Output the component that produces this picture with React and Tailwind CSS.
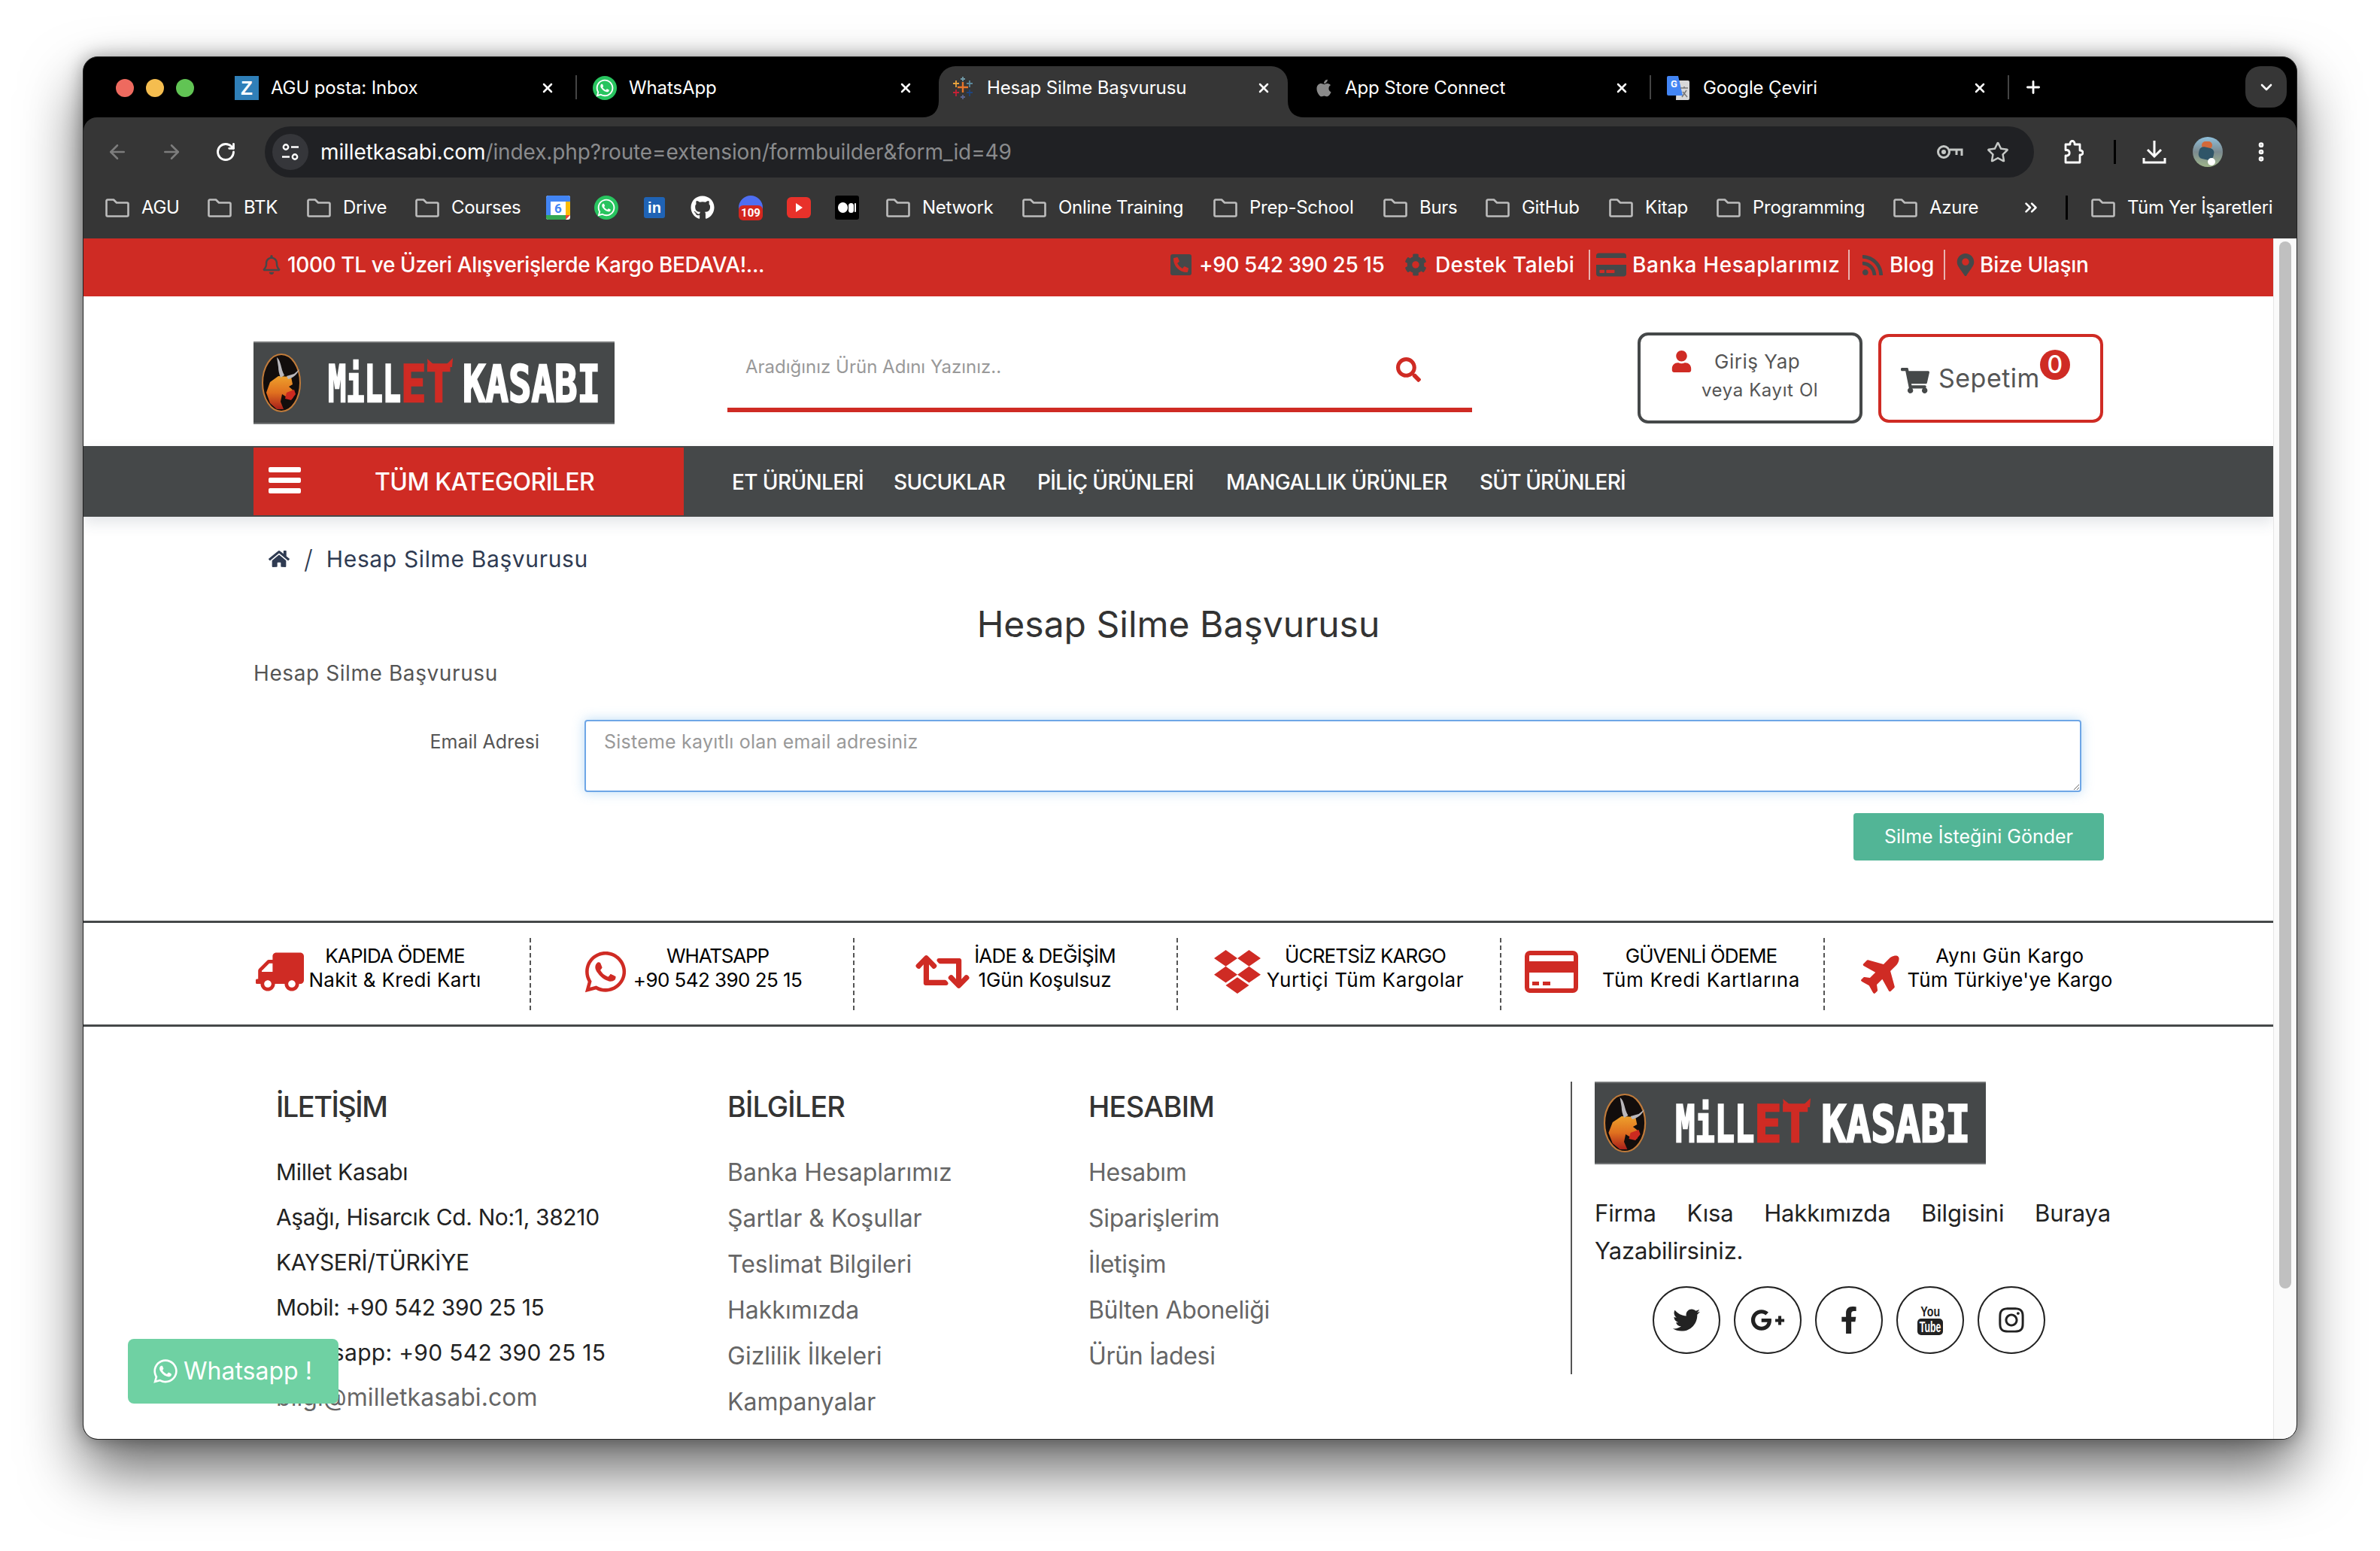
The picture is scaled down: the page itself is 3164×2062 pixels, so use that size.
import React from 'react';
import { FaWhatsapp, FaApple, FaGithub, FaRegBell, FaPhoneSquareAlt, FaCog, FaCreditCard, FaRss, FaMapMarkerAlt, FaUser, FaShoppingCart, FaSearch, FaHome, FaTruck, FaRetweet, FaDropbox, FaPlane, FaTwitter, FaGooglePlusG, FaFacebookF, FaInstagram, FaRegStar } from 'react-icons/fa';
import { ArrowLeft, ArrowRight, RotateCw, X, Plus, ChevronDown, EllipsisVertical, ChevronsRight } from 'lucide-react';

const Folder = () => (
  <svg width="32" height="25" viewBox="0 0 32 25" className="shrink-0" fill="none" stroke="#bdbdbd" strokeWidth="2.6" strokeLinejoin="round">
    <path d="M1.5 3a1.5 1.5 0 0 1 1.5-1.5h8l4 4h14a1.5 1.5 0 0 1 1.5 1.5v15a1.5 1.5 0 0 1-1.5 1.5H3a1.5 1.5 0 0 1-1.5-1.5z" />
  </svg>
);

const Logo = ({ w, id }) => (
  <svg width={w} height="110" viewBox="0 0 480 110" preserveAspectRatio="none" className="block shrink-0">
    <defs>
      <linearGradient id={id} x1="0" y1="0" x2="0" y2="1">
        <stop offset="0" stopColor="#eda02c" />
        <stop offset="0.5" stopColor="#e0701f" />
        <stop offset="1" stopColor="#a81f1a" />
      </linearGradient>
    </defs>
    <rect width="480" height="110" fill="#454849" />
    <rect width="480" height="2" fill="#737576" />
    <rect y="108" width="480" height="2" fill="#737576" />
    <ellipse cx="37" cy="55" rx="25" ry="38" fill="#120d0c" stroke="#c17b3a" strokeWidth="2" />
    <path d="M33 46 L50 47 L52 57 L47 60 L54 66 L52 76 L44 74 L38 70 L36 80 L40 90 L31 90 L22 82 L17 68 L22 54 Z" fill={`url(#${id})`} />
    <path d="M33 34 L31 21 C37 26 36 36 41 45 L36 48 C34 43 33 38 33 34 Z M61 37 C58 44 52 49 46 50 L44 46 L54 43 Z" fill="#b9b7bb" />
    <path d="M44 68 L54 64 L56 70 L50 78 L42 76 Z" fill="#cc2a20" />
    <g fontFamily="'DejaVu Sans Mono', monospace" fontWeight="700" fontSize="67" strokeWidth="2.4" strokeLinejoin="miter">
      <text x="99" y="80" textLength="97" lengthAdjust="spacingAndGlyphs" fill="#fff" stroke="#fff">MiLL</text>
      <text x="196" y="80" textLength="67" lengthAdjust="spacingAndGlyphs" fill="#cf2b24" stroke="#cf2b24">ET</text>
      <text x="278" y="80" textLength="183" lengthAdjust="spacingAndGlyphs" fill="#fff" stroke="#fff">KASABI</text>
    </g>
    <path d="M232 34 L231 23 L239 30 L257 30 L265 22 L264 34 Z" fill="#cf2b24" />
  </svg>
);

const Tableau = () => (
  <svg width="32" height="32" viewBox="0 0 32 32" className="shrink-0" strokeWidth="1.8" fill="none">
    <path d="M16 8v14M9 15h14" stroke="#e8762b" strokeWidth="2.4" />
    <path d="M7 6v9M3 10h8" stroke="#e8a33d" />
    <path d="M25 6v9M21 10h8" stroke="#5b879b" />
    <path d="M16 1v6M13 4h6" stroke="#7099a6" />
    <path d="M7 18v9M3 22h8" stroke="#c72035" />
    <path d="M25 18v9M21 22h8" stroke="#1f447e" />
    <path d="M16 25v6M13 28h6" stroke="#5b6591" />
  </svg>
);

const Translate = () => (
  <svg width="30" height="32" viewBox="0 0 30 32" className="shrink-0">
    <path d="M13 6h15a2 2 0 0 1 2 2v22a2 2 0 0 1-2 2H12z" fill="#d8d8d8" />
    <path d="M2 0h13l6 26H2a2 2 0 0 1-2-2V2a2 2 0 0 1 2-2z" fill="#4285f4" />
    <text x="5" y="15" fontSize="13" fontWeight="700" fill="#fff" fontFamily="Roboto, sans-serif">G</text>
    <path d="M18 16h10M23 14v2M20 28l6-9M21 21l6 7" stroke="#777" strokeWidth="1.5" fill="none" />
  </svg>
);

const tabs = [
  { icon: <div className="w-8 h-8 shrink-0 bg-[#2f7fb8] flex items-center justify-center text-white font-bold text-[26px] font-['Liberation_Sans',sans-serif]">Z</div>, t: 'AGU posta: Inbox', sep: true },
  { icon: <div className="w-8 h-8 shrink-0 rounded-full bg-[#28c45f] flex items-center justify-center text-white"><FaWhatsapp size={26} /></div>, t: 'WhatsApp' },
  { icon: <Tableau />, t: 'Hesap Silme Başvurusu', active: true },
  { icon: <div className="w-8 h-8 shrink-0 flex items-center justify-center text-[#8a8a8a] pl-2"><FaApple size={26} /></div>, t: 'App Store Connect', sep: true },
  { icon: <Translate />, t: 'Google Çeviri', sep: true },
];

const Tab = ({ icon, t, active, sep }) => (
  <div className="relative w-[476px] h-[68px] pt-[12px] flex items-start shrink-0">
    {active && (
      <>
        <div className="absolute left-0 top-0 w-[464px] h-[68px] bg-[#363636] rounded-t-[22px]" />
        <svg className="absolute left-[-22px] bottom-0" width="22" height="22" viewBox="0 0 22 22"><path d="M22 0v22H0C14 22 22 14 22 0z" fill="#363636" /></svg>
        <svg className="absolute left-[464px] bottom-0" width="22" height="22" viewBox="0 0 22 22"><path d="M0 0v22h22C8 22 0 14 0 0z" fill="#363636" /></svg>
      </>
    )}
    <div className="relative flex items-center h-[34px] w-full pl-[16px]">
      {icon}
      <span className="absolute left-[64px] text-[24px] leading-[34px] text-white whitespace-nowrap tracking-[-0.005em]">{t}</span>
      <X className="absolute left-[422px] text-white" size={20} strokeWidth={3} />
      {sep && <div className="absolute left-[469px] top-0 w-[2px] h-[32px] bg-[#444]" />}
    </div>
  </div>
);

const bm = (label, w) => ({ label, w });
const group1 = [bm('AGU', 50), bm('BTK', 46), bm('Drive', 58), bm('Courses', 92)];
const group2 = [bm('Network', 95), bm('Online Training', 168), bm('Prep-School', 140), bm('Burs', 50), bm('GitHub', 78), bm('Kitap', 57), bm('Programming', 149), bm('Azure', 63)];

const Bookmark = ({ label, w }) => (
  <div className="flex items-center gap-[16px] shrink-0">
    <Folder />
    <span className="text-[24px] leading-[30px] text-white whitespace-nowrap tracking-[-0.012em]" style={{ width: w }}>{label}</span>
  </div>
);

const TopSep = () => <div className="w-[2px] h-[40px] bg-[#e9b3b0] shrink-0" />;

const CardIcon = () => (
  <svg width="71" height="56" viewBox="0 0 71 56" className="text-[#cf2b24]">
    <rect x="3" y="3" width="65" height="50" rx="4" fill="#fff" stroke="currentColor" strokeWidth="6" />
    <rect y="14" width="71" height="15" fill="currentColor" />
    <path d="M10 41h9v5h-9zM24 41h10v5H24z" fill="currentColor" />
  </svg>
);

const features = [
  { icon: <FaTruck size={64} className="-scale-x-100 text-[#cf2b24]" />, a: 'KAPIDA ÖDEME', b: 'Nakit & Kredi Kartı', gap: 'gap-[6px]', ta: 'tracking-[-0.032em]', tb: 'tracking-[0.012em]' },
  { icon: <FaWhatsapp size={62} className="text-[#cf2b24]" />, a: 'WHATSAPP', b: '+90 542 390 25 15', gap: 'gap-[6px]', ta: 'tracking-[-0.045em]', tb: 'tracking-[-0.022em]' },
  { icon: <FaRetweet size={72} className="text-[#cf2b24]" />, a: 'İADE & DEĞİŞİM', b: '1Gün Koşulsuz', gap: 'gap-[6px]', ta: 'tracking-[-0.03em]', tb: 'tracking-[-0.006em]' },
  { icon: <FaDropbox size={62} className="scale-y-110 text-[#cf2b24]" />, a: 'ÜCRETSİZ KARGO', b: 'Yurtiçi Tüm Kargolar', gap: 'gap-[8px]', ta: 'tracking-[-0.034em]', tb: 'tracking-[0.024em]' },
  { icon: <CardIcon />, a: 'GÜVENLİ ÖDEME', b: 'Tüm Kredi Kartlarına', gap: 'gap-[32px]', ta: 'tracking-[-0.038em]', tb: 'tracking-[0.024em]' },
  { icon: <FaPlane size={58} className="-rotate-45 text-[#cf2b24]" />, a: 'Aynı Gün Kargo', b: 'Tüm Türkiye\'ye Kargo', gap: 'gap-[4px]', ta: 'tracking-[0.02em]', tb: 'tracking-[0.008em]' },
];

const Social = ({ children }) => (
  <div className="w-[90px] h-[90px] rounded-full border-2 border-[#222] flex items-center justify-center text-[#222] shrink-0">{children}</div>
);

export default function App() {
  return (
    <div className="w-[3164px] h-[2062px] bg-white pt-[75px] pl-[110px] overflow-hidden font-['Inter',sans-serif]">
      <div className="w-[2944px] h-[1839px] rounded-[20px] overflow-hidden bg-black flex flex-col shadow-[0_40px_80px_rgba(0,0,0,0.6),0_0_24px_rgba(0,0,0,0.35)] border border-[#222]">
        {/* tab strip */}
        <div className="relative h-[80px] shrink-0 pt-[12px] flex items-start">
          <div className="flex items-center gap-[16px] pl-[43px] w-[185px] pt-[17px] shrink-0">
            <div className="w-6 h-6 rounded-full bg-[#ee6a5f]" />
            <div className="w-6 h-6 rounded-full bg-[#f5bd4f]" />
            <div className="w-6 h-6 rounded-full bg-[#61c454]" />
          </div>
          {tabs.map((t) => <Tab key={t.t} {...t} />)}
          <Plus className="text-white ml-[14px] mt-[15px] shrink-0" size={26} strokeWidth={2.6} />
          <div className="absolute left-[2874px] top-[12px] w-[55px] h-[55px] rounded-[20px] bg-[#363636] flex items-center justify-center">
            <ChevronDown className="text-white" size={24} strokeWidth={2.6} />
          </div>
        </div>
        {/* toolbar */}
        <div className="h-[161px] shrink-0 bg-[#363636] rounded-t-[18px] flex flex-col">
          <div className="h-[92px] flex items-center pl-[9px]">
            <div className="w-[72px] flex justify-center shrink-0"><ArrowLeft className="text-[#7d7d7d]" size={30} strokeWidth={2} /></div>
            <div className="w-[72px] flex justify-center shrink-0"><ArrowRight className="text-[#7d7d7d]" size={30} strokeWidth={2} /></div>
            <div className="w-[72px] flex justify-center shrink-0"><RotateCw className="text-white" size={28} strokeWidth={2.4} /></div>
            <div className="ml-[16px] w-[2352px] h-[68px] shrink-0 rounded-full bg-[#202124] flex items-center pl-[10px]">
              <div className="w-[48px] h-[48px] rounded-full bg-[#35363a] flex items-center justify-center shrink-0">
                <svg width="26" height="26" viewBox="0 0 26 26" fill="none" stroke="#fff" strokeWidth="2.4">
                  <circle cx="7" cy="6.5" r="3.2" /><path d="M14 6.5h10M2 19.5h10" /><circle cx="19" cy="19.5" r="3.2" />
                </svg>
              </div>
              <div className="ml-[16px] text-[28px] leading-[40px] whitespace-nowrap text-[#8a8b8d] tracking-[-0.004em]"><span className="text-white">milletkasabi.com</span>/index.php?route=extension/formbuilder&amp;form_id=49</div>
              <div className="ml-auto w-[64px] flex justify-center">
                <svg width="36" height="22" viewBox="0 0 36 22" fill="none" stroke="#c4c7c5" strokeWidth="3">
                  <circle cx="10" cy="11" r="7.5" /><circle cx="10" cy="11" r="1.5" /><path d="M18 8h16v8M27 8v7" />
                </svg>
              </div>
              <div className="w-[64px] mr-[16px] flex justify-center"><FaRegStar className="text-[#c4c7c5]" size={30} /></div>
            </div>
            <div className="w-[106px] flex justify-center shrink-0">
              <svg width="26" height="32" viewBox="0 0 26 32" fill="none" stroke="#fff" strokeWidth="2.8" strokeLinejoin="round">
                <path d="M2 6h6V4.500a3 3 0 0 1 6 0V6h7v8h1a3 3 0 0 1 0 6h-1v10H2v-9h2a3.800 3.800 0 0 0 0-7.500H2z" />
              </svg>
            </div>
            <div className="w-[3px] h-[32px] bg-black shrink-0" />
            <div className="w-[102px] flex justify-center shrink-0">
              <svg width="32" height="32" viewBox="0 0 32 32" fill="none" stroke="#fff" strokeWidth="3">
                <path d="M16 1v20M7 13l9 9 9-9M2 24v6h28v-6" />
              </svg>
            </div>
            <div className="w-[40px] h-[40px] rounded-full shrink-0 bg-gradient-to-b from-[#8fc0dc] via-[#7b8a8f] to-[#9fb58a] relative overflow-hidden">
              <div className="absolute left-[12px] top-[6px] w-[14px] h-[10px] rounded-full bg-[#d2693a]" />
              <div className="absolute left-[8px] top-[14px] w-[20px] h-[16px] rounded-md bg-[#2f5568] rotate-12" />
              <div className="absolute left-[20px] top-[28px] w-[10px] h-[10px] rounded-full bg-white" />
            </div>
            <div className="w-[102px] flex justify-center shrink-0"><EllipsisVertical className="text-white" size={32} strokeWidth={3} /></div>
          </div>
          <div className="h-[69px] flex items-start pt-[6px] pl-[29px] gap-[38px]">
            {group1.map((b) => <div key={b.label} className="h-[44px] flex items-center"><Bookmark {...b} /></div>)}
            <div className="flex items-center gap-[32px] h-[44px] -ml-[4px] mr-[-2px]">
              <svg width="32" height="32" viewBox="0 0 32 32"><rect width="32" height="32" rx="3" fill="#fff" /><path d="M0 3a3 3 0 0 1 3-3h26a3 3 0 0 1 3 3v5H0z" fill="#4285f4" /><path d="M0 8h6v18H0z" fill="#4285f4" /><path d="M26 8h6v18h-6z" fill="#fbbc04" /><path d="M0 26h26v6H3a3 3 0 0 1-3-3z" fill="#34a853" /><path d="M26 26h6l-6 6z" fill="#ea4335" /><text x="16" y="23" textAnchor="middle" fontSize="17" fontWeight="700" fill="#4285f4" fontFamily="Roboto, sans-serif">6</text></svg>
              <div className="w-8 h-8 rounded-full bg-[#28c45f] flex items-center justify-center text-white"><FaWhatsapp size={26} /></div>
              <div className="w-[28px] h-[28px] rounded-[3px] bg-[#1f63b5] flex items-center justify-center text-white text-[20px] font-bold font-['Liberation_Sans',sans-serif] ml-[2px] mr-[2px]">in</div>
              <FaGithub className="text-white" size={32} />
              <div className="relative w-8 h-8 rounded-full bg-[#4e6ef2]"><div className="absolute left-0 right-0 bottom-[-1px] h-[20px] rounded-[6px] bg-[#d3271f] text-white text-[15px] leading-[20px] text-center font-bold font-['Roboto',sans-serif]">109</div></div>
              <div className="w-8 h-[28px] rounded-[6px] bg-[#e8312a] flex items-center justify-center"><div className="w-0 h-0 border-y-[6px] border-y-transparent border-l-[9px] border-l-white" /></div>
              <div className="w-8 h-8 rounded-[3px] bg-black flex items-center justify-center gap-[1px]"><div className="w-[13px] h-[14px] rounded-full bg-white" /><div className="w-[7px] h-[13px] rounded-full bg-white" /><div className="w-[2px] h-[12px] rounded-full bg-white" /></div>
            </div>
            {group2.map((b) => <div key={b.label} className="h-[44px] flex items-center"><Bookmark {...b} /></div>)}
            <div className="h-[44px] flex items-center ml-[21px]"><ChevronsRight className="text-white" size={26} strokeWidth={2.4} /></div>
            <div className="h-[32px] w-[3px] bg-black mt-[6px] -ml-[5px] shrink-0" />
            <div className="h-[44px] flex items-center -ml-[7px]"><Bookmark label="Tüm Yer İşaretleri" w={194} /></div>
          </div>
        </div>
        {/* page */}
        <div className="flex-1 min-h-0 flex bg-white">
          <div className="w-[2911px] shrink-0 text-[#333] overflow-hidden">
            {/* top bar */}
            <div className="h-[77px] bg-[#cf2b24] flex items-center text-white text-[28px] font-medium whitespace-nowrap pl-[237px] pb-[7px]">
              <FaRegBell className="text-[#454849] mr-[8px] shrink-0" size={26} />
              <span className="w-[633px] tracking-[-0.014em]">1000 TL ve Üzeri Alışverişlerde Kargo BEDAVA!...</span>
              <FaPhoneSquareAlt className="text-[#454849] ml-[539px] mr-[8px] shrink-0" size={32} />
              <span className="w-[246px] tracking-[-0.016em]">+90 542 390 25 15</span>
              <FaCog className="text-[#454849] ml-[27px] mr-[11px] shrink-0" size={30} />
              <span className="w-[185px] tracking-[0.013em]">Destek Talebi</span>
              <div className="ml-[19px]"><TopSep /></div>
              <FaCreditCard className="text-[#454849] ml-[8px] mr-[8px] shrink-0" size={40} />
              <span className="w-[276px] tracking-[0.024em]">Banka Hesaplarımız</span>
              <div className="ml-[11px]"><TopSep /></div>
              <FaRss className="text-[#454849] ml-[15px] mr-[7px] shrink-0" size={31} />
              <span className="w-[60px] tracking-[-0.005em]">Blog</span>
              <div className="ml-[12px]"><TopSep /></div>
              <FaMapMarkerAlt className="text-[#454849] ml-[12px] mr-[4px] shrink-0" size={30} />
              <span className="tracking-[-0.008em]">Bize Ulaşın</span>
            </div>
            {/* header */}
            <div className="h-[199px] flex items-start pl-[226px] pt-[60px]">
              <Logo w={480} id="g1" />
              <div className="ml-[150px] w-[990px] h-[94px] border-b-[6px] border-[#cf2b24] flex items-center pl-[24px] pr-[68px] pb-[20px]">
                <input readOnly placeholder="Aradığınız Ürün Adını Yazınız.." className="flex-1 outline-none bg-transparent text-[24px] placeholder:text-[#999]" />
                <FaSearch className="text-[#cf2b24] mt-[6px]" size={33} />
              </div>
              <div className="ml-[220px] -mt-[12px] w-[299px] h-[121px] rounded-[14px] border-[4px] border-[#454849] flex flex-col pt-[14px] text-[#555] relative">
                <div className="flex items-center pl-[40px] h-[40px]">
                  <FaUser className="text-[#cf2b24]" size={29} />
                  <span className="ml-[29px] text-[26px] tracking-[0.02em]">Giriş Yap</span>
                </div>
                <div className="text-[24px] tracking-[0.025em] leading-[38px] pl-[81px]">veya Kayıt Ol</div>
              </div>
              <div className="ml-[21px] -mt-[10px] w-[299px] h-[118px] rounded-[14px] border-[4px] border-[#cf2b24] flex items-start pt-[19px] pl-[26px] text-[#555]">
                <FaShoppingCart className="text-[#454849] mt-[20px]" size={38} />
                <span className="ml-[12px] mt-[14px] text-[34px] leading-[44px] tracking-[0.014em]">Sepetim</span>
                <div className="w-[40px] h-[40px] rounded-full bg-[#cf2b24] text-white text-[32px] leading-[40px] text-center font-medium -mt-[2px]">0</div>
              </div>
            </div>
            {/* nav */}
            <div className="relative h-[94px] bg-[#454849] flex items-center pl-[226px] shadow-[0_8px_18px_rgba(60,70,90,0.14)] text-white text-[28px] font-medium tracking-[-0.022em]">
              <div className="w-[572px] h-[90px] bg-[#cf2b24] flex items-center shrink-0 pl-[20px]">
                <div className="flex flex-col gap-[7px] pb-[4px]">
                  <div className="w-[43px] h-[7px] rounded-[2px] bg-white" />
                  <div className="w-[43px] h-[7px] rounded-[2px] bg-white" />
                  <div className="w-[43px] h-[7px] rounded-[2px] bg-white" />
                </div>
                <span className="ml-[98px] pt-[2px] text-[32px] whitespace-nowrap tracking-[-0.017em]">TÜM KATEGORİLER</span>
              </div>
              <span className="ml-[64px] pt-[2px] w-[215px] whitespace-nowrap">ET ÜRÜNLERİ</span>
              <span className="w-[191px] pt-[2px] whitespace-nowrap">SUCUKLAR</span>
              <span className="w-[251px] pt-[2px] whitespace-nowrap">PİLİÇ ÜRÜNLERİ</span>
              <span className="w-[337px] pt-[2px] whitespace-nowrap">MANGALLIK ÜRÜNLER</span>
              <span className="whitespace-nowrap pt-[2px] tracking-[-0.03em]">SÜT ÜRÜNLERİ</span>
            </div>
            {/* breadcrumb */}
            <div className="h-[112px] pl-[246px] pt-[26px] flex items-center pb-[26px] text-[#2f3b52]">
              <FaHome size={28} />
              <span className="ml-[19px] text-[34px] font-light">/</span>
              <span className="ml-[18px] text-[30px] tracking-[0.021em]">Hesap Silme Başvurusu</span>
            </div>
            {/* title */}
            <h1 className="text-center text-[48px] leading-[60px] text-[#333] pt-[1px]">Hesap Silme Başvurusu</h1>
            <div className="pl-[226px] mt-[15px] text-[28px] leading-[40px] text-[#555] tracking-[0.021em]">Hesap Silme Başvurusu</div>
            {/* form */}
            <div className="flex mt-[42px]">
              <label className="w-[606px] text-right text-[25px] leading-[40px] text-[#555] pt-[9px] shrink-0">Email Adresi</label>
              <textarea readOnly placeholder="Sisteme kayıtlı olan email adresiniz" className="ml-[60px] w-[1990px] h-[96px] border-2 border-[#6ea6e6] rounded-[4px] outline-none shadow-[0_0_16px_rgba(102,175,233,0.45)] px-[24px] py-[12px] text-[25px] leading-[30px] tracking-[0.009em] placeholder:text-[#999]" />
            </div>
            <div className="flex justify-end pr-[225px] mt-[28px]">
              <div className="w-[333px] h-[63px] rounded-[4px] bg-[#52b596] flex items-center justify-center text-white text-[25px]">Silme İsteğini Gönder</div>
            </div>
            {/* features */}
            <div className="mt-[80px] h-[141px] border-y-[3px] border-[#454849] flex items-center pl-[165px]">
              {features.map((f, i) => (
                <div key={f.a} className={`w-[430px] h-[96px] flex items-center justify-center shrink-0 ${f.gap} ${i < 5 ? 'border-r-2 border-dashed border-[#555]' : ''}`}>
                  <div className="shrink-0 mb-[6px]">{f.icon}</div>
                  <div className="text-center text-[26px] leading-[32px] text-black whitespace-nowrap mb-[15px]">
                    <div className={f.ta}>{f.a}</div>
                    <div className={f.tb}>{f.b}</div>
                  </div>
                </div>
              ))}
            </div>
            {/* footer */}
            <div className="flex pl-[256px] pt-[73px] relative">
              <div className="w-[600px] shrink-0">
                <h3 className="mt-[8px] text-[38px] leading-[50px] font-medium text-[#333] tracking-[-0.04em]">İLETİŞİM</h3>
                <div className="mt-[32px] text-[30px] leading-[60.1px] text-[#222] tracking-[-0.012em] whitespace-nowrap">
                  <div>Millet Kasabı</div>
                  <div>Aşağı, Hisarcık Cd. No:1, 38210</div>
                  <div>KAYSERİ/TÜRKİYE</div>
                  <div>Mobil: +90 542 390 25 15</div>
                  <div className="tracking-[0.01em]">Whatsapp: +90 542 390 25 15</div>
                  <div className="text-[#666] text-[32px] tracking-[0.002em]">bilgi@milletkasabi.com</div>
                </div>
              </div>
              <div className="w-[480px] shrink-0">
                <h3 className="mt-[8px] text-[38px] leading-[50px] font-medium text-[#333] tracking-[-0.025em]">BİLGİLER</h3>
                <div className="mt-[32px] text-[32px] leading-[61px] text-[#666] whitespace-nowrap">
                  <div>Banka Hesaplarımız</div>
                  <div>Şartlar &amp; Koşullar</div>
                  <div>Teslimat Bilgileri</div>
                  <div>Hakkımızda</div>
                  <div>Gizlilik İlkeleri</div>
                  <div>Kampanyalar</div>
                </div>
              </div>
              <div className="w-[641px] shrink-0">
                <h3 className="mt-[8px] text-[38px] leading-[50px] font-medium text-[#333] tracking-[-0.02em]">HESABIM</h3>
                <div className="mt-[32px] text-[32px] leading-[61px] text-[#666] tracking-[-0.01em] whitespace-nowrap">
                  <div>Hesabım</div>
                  <div>Siparişlerim</div>
                  <div>İletişim</div>
                  <div>Bülten Aboneliği</div>
                  <div>Ürün İadesi</div>
                </div>
              </div>
              <div className="border-l-2 border-[#555] h-[389px] pl-[30px] w-[720px] shrink-0">
                <Logo w={520} id="g2" />
                <p className="mt-[40px] w-[686px] text-justify text-[31px] leading-[50px] text-[#222] tracking-[-0.005em]">Firma Kısa Hakkımızda Bilgisini Buraya Yazabilirsiniz.</p>
                <div className="mt-[22px] ml-[77px] flex gap-[18px]">
                  <Social><FaTwitter size={36} /></Social>
                  <Social><FaGooglePlusG size={46} /></Social>
                  <Social><FaFacebookF size={36} /></Social>
                  <Social>
                    <div className="flex flex-col items-center font-['Liberation_Sans',sans-serif] font-bold leading-none">
                      <span className="text-[19px] scale-x-75 leading-[17px]">You</span>
                      <span className="mt-[1px] w-[34px] h-[22px] bg-[#222] rounded-[5px] flex items-center justify-center overflow-hidden"><span className="text-white text-[20px] scale-x-[0.62] whitespace-nowrap">Tube</span></span>
                    </div>
                  </Social>
                  <Social><FaInstagram size={38} /></Social>
                </div>
              </div>
              <div className="absolute left-[59px] top-[415px] w-[280px] h-[86px] rounded-[8px] bg-[#6fd1a3] flex items-center pl-[32px] text-white">
                <FaWhatsapp size={36} />
                <span className="ml-[6px] text-[32px]">Whatsapp !</span>
              </div>
            </div>
          </div>
          <div className="w-[30px] shrink-0 border-l border-[#e6e6e6] bg-[#fafafa] pl-[7px] pt-[4px]">
            <div className="w-[16px] h-[1392px] rounded-full bg-[#c0c0c0]" />
          </div>
        </div>
      </div>
    </div>
  );
}
